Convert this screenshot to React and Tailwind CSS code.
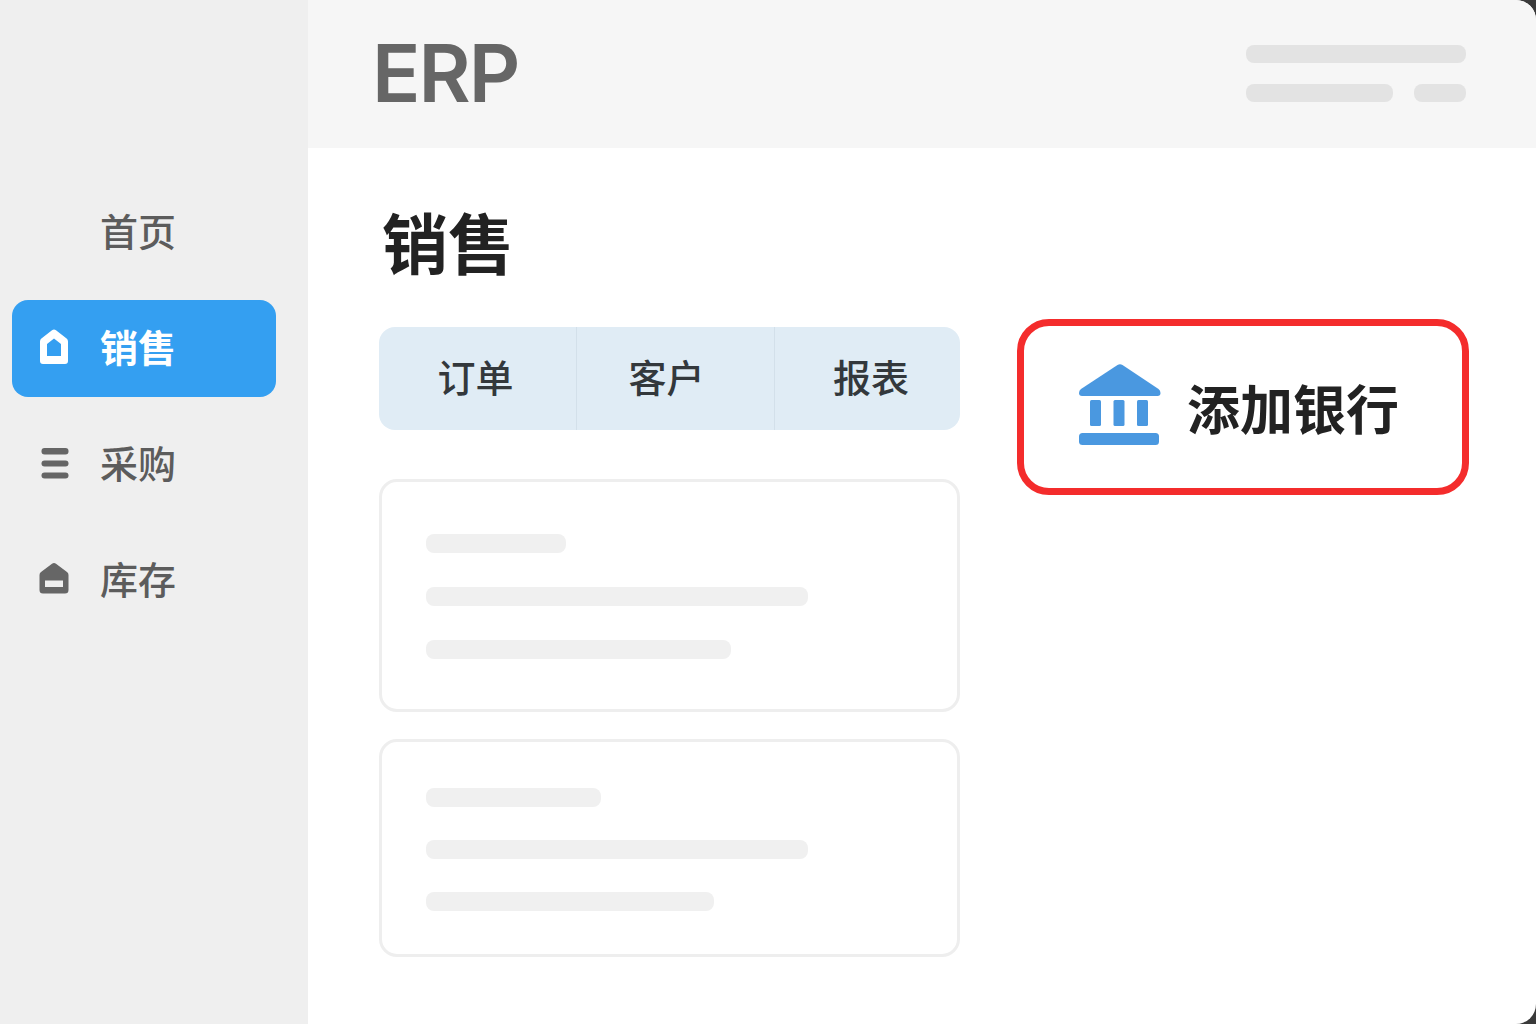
const HouseIcon = () => (
    <svg width="30" height="36" viewBox="0 0 30 36" className="shrink-0">
        <path
            fillRule="evenodd"
            fill="#ffffff"
            d="M15 0.5 Q16 0.5 17 1.3 L27.6 9.5 Q29 10.7 29 12.5 V32 Q29 35 26 35 H4 Q1 35 1 32 V12.5 Q1 10.7 2.4 9.5 L13 1.3 Q14 0.5 15 0.5 Z M15 9.5 L8 15 V27 H22 V15 Z"
        />
    </svg>
);

const MenuIcon = () => (
    <svg width="30" height="34" viewBox="0 0 30 34" className="shrink-0">
        <rect x="2.5" y="2" width="27" height="6.5" rx="3" fill="#666666" />
        <rect x="2.5" y="14.5" width="27" height="6" rx="3" fill="#666666" />
        <rect x="2.5" y="26.5" width="27" height="6" rx="3" fill="#666666" />
    </svg>
);

const BoxIcon = () => (
    <svg width="30" height="32" viewBox="0 0 30 32" className="shrink-0">
        <path
            fillRule="evenodd"
            fill="#666666"
            d="M15 0 Q16 0 17 0.8 L28 9 Q29.5 10.2 29.5 12 V27 Q29.5 30.5 26 30.5 H4 Q0.5 30.5 0.5 27 V12 Q0.5 10.2 2 9 L13 0.8 Q14 0 15 0 Z M6 17.5 V24 H24 V17.5 Z"
        />
    </svg>
);

const BankIcon = () => (
    <svg width="82" height="82" viewBox="0 0 82 82" className="shrink-0">
        <path d="M38.5 1 Q41 -0.5 43.5 1 L79.5 25 Q81.5 26.5 81.5 29 Q81.5 32 78.5 32 H3 Q0 32 0 29 Q0 26.5 2 25 Z" fill="#4a98e0" />
        <rect x="11" y="36" width="11" height="26" rx="1.5" fill="#4a98e0" />
        <rect x="34.5" y="36" width="11" height="26" rx="1.5" fill="#4a98e0" />
        <rect x="58" y="36" width="11" height="26" rx="1.5" fill="#4a98e0" />
        <rect x="0" y="69" width="80" height="12" rx="3.5" fill="#4a98e0" />
    </svg>
);

const navItems = [
    { label: '首页' },
    { label: '销售', icon: <HouseIcon />, active: true },
    { label: '采购', icon: <MenuIcon /> },
    { label: '库存', icon: <BoxIcon /> },
];

const tabs = [
    { label: '订单', className: 'w-[198px] pr-[4px] border-r border-[#d3e0ea]' },
    { label: '客户', className: 'w-[198px] pr-[18px] border-r border-[#d3e0ea]' },
    { label: '报表', className: 'flex-1 pl-[7px]' },
];

const cards = [
    { height: 'h-[233px]', pad: 'pt-[52px]', gap: 'gap-[34px]', bars: ['w-[140px]', 'w-[382px]', 'w-[305px]'] },
    { height: 'h-[218px]', pad: 'pt-[46px]', gap: 'gap-[33px]', bars: ['w-[175px]', 'w-[382px]', 'w-[288px]'] },
];

const App = () => {
    return (
        <div className="w-[1536px] h-[1024px] overflow-hidden bg-[#3a3a3a] font-['Noto_Sans_CJK_SC','Noto_Sans',sans-serif]">
            <div className="flex h-full bg-white rounded-r-[20px] overflow-hidden">
                {/* Sidebar */}
                <div className="w-[308px] shrink-0 bg-[#efefef] pt-[184px] pl-[12px]">
                    <div className="flex flex-col gap-[19px] w-[264px]">
                        {navItems.map((item) => (
                            <div
                                key={item.label}
                                className={`flex items-center h-[97px] pl-[27px] rounded-[16px] ${item.active ? 'bg-[#349ff1]' : ''}`}
                            >
                                <div className="w-[61px] shrink-0 flex items-center pb-[4px]">{item.icon}</div>
                                <span className={`text-[38px] leading-none pb-[5px] ${item.active ? 'font-bold text-white' : 'font-medium text-[#5c5c5c]'}`}>
                                    {item.label}
                                </span>
                            </div>
                        ))}
                    </div>
                </div>

                {/* Main */}
                <div className="flex-1 flex flex-col min-w-0">
                    {/* Header */}
                    <div className="h-[148px] shrink-0 bg-[#f6f6f6] flex items-center justify-between pl-[64px] pr-[70px]">
                        <span className="font-['Inter',sans-serif] text-[80px] leading-none font-semibold text-[#666666] -mt-[3px] tracking-[-2px]">ERP</span>
                        <div className="flex flex-col gap-[21px] w-[220px] -mt-[2px]">
                            <div className="h-[18px] rounded-[8px] bg-[#e3e3e3]" />
                            <div className="flex justify-between">
                                <div className="w-[147px] h-[18px] rounded-[8px] bg-[#e3e3e3]" />
                                <div className="w-[52px] h-[18px] rounded-[8px] bg-[#e3e3e3]" />
                            </div>
                        </div>
                    </div>

                    {/* Content */}
                    <div className="pl-[71px] pt-[46px]">
                        <h1 className="text-[66px] leading-[92px] font-bold text-[#222222] pl-[3px]">销售</h1>
                        <div className="flex items-start mt-[33px]">
                            <div className="w-[581px] shrink-0 flex flex-col mt-[8px]">
                                <div className="flex h-[103px] rounded-[16px] bg-[#e0ecf5] overflow-hidden">
                                    {tabs.map((tab) => (
                                        <div key={tab.label} className={`flex items-center justify-center pb-[6px] text-[38px] leading-none font-medium text-[#33383c] ${tab.className}`}>
                                            {tab.label}
                                        </div>
                                    ))}
                                </div>
                                <div className="flex flex-col gap-[27px] mt-[49px]">
                                    {cards.map((card) => (
                                        <div key={card.height} className={`${card.height} ${card.pad} ${card.gap} flex flex-col pl-[44px] border-[3px] border-[#eeeeee] rounded-[18px] bg-white`}>
                                            {card.bars.map((bar) => (
                                                <div key={bar} className={`${bar} h-[19px] rounded-[8px] bg-[#f0f0f0]`} />
                                            ))}
                                        </div>
                                    ))}
                                </div>
                            </div>

                            {/* Add bank button */}
                            <div className="ml-[57px] w-[452px] h-[176px] shrink-0 flex items-center pl-[55px] border-[7px] border-[#f42c2c] rounded-[32px] bg-white">
                                <div className="pb-[4px] flex">
                                    <BankIcon />
                                </div>
                                <span className="ml-[26px] text-[53px] leading-none font-bold text-[#222222]">添加银行</span>
                            </div>
                        </div>
                    </div>
                </div>
            </div>
        </div>
    );
};

export default App;
